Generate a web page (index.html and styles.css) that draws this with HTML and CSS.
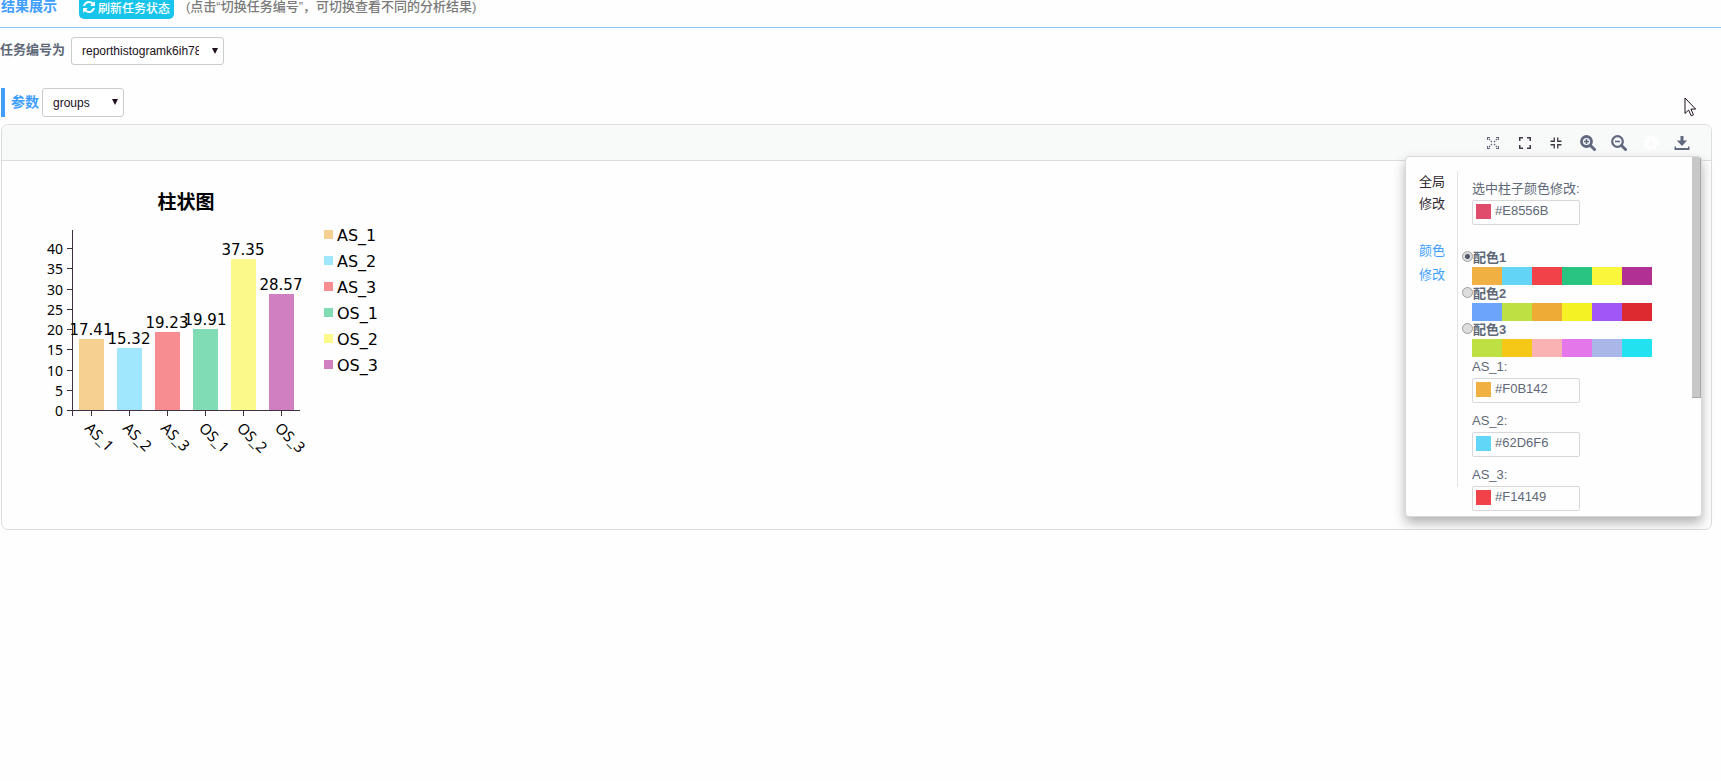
FILE: index.html
```html
<!DOCTYPE html>
<html lang="zh-CN">
<head>
    <meta charset="UTF-8">
    <meta name="viewport" content="width=device-width, initial-scale=1.0">
    <title>结果展示</title>
    <link rel="stylesheet" href="styles.css">
</head>
<body>
    <header class="page-header">
        <h1 class="page-title">结果展示</h1>
        <button class="refresh" type="button">
            <svg width="12" height="12" viewBox="0 0 1536 1536" fill="currentColor"><path d="M1511 928q0 5-1 7-64 268-268 434.500T764 1536q-146 0-282.500-55T238 1324l-129 129q-19 19-45 19t-45-19-19-45V960q0-26 19-45t45-19h448q26 0 45 19t19 45-19 45l-137 137q71 66 161 102t187 36q134 0 250-65t186-179q11-17 53-117 8-23 30-23h192q13 0 22.500 9.500t9.500 22.500zM1536 128v448q0 26-19 45t-45 19h-448q-26 0-45-19t-19-45 19-45l138-138Q969 256 768 256q-134 0-250 65T332 500q-11 17-53 117-8 23-30 23H50q-13 0-22.500-9.500T18 608v-7q65-268 270-434.500T768 0q146 0 284 55.500T1297 212l130-129q19-19 45-19t45 19 19 45z"/></svg>
            刷新任务状态
        </button>
        <p class="hint">(点击“切换任务编号”，可切换查看不同的分析结果)</p>
    </header>

    <main>
        <div class="task-row">
            <label for="task">任务编号为</label>
            <span class="select-box task-select">
                <select id="task">
                    <option>reporthistogramk6ih78</option>
                </select>
            </span>
        </div>

        <div class="param-row">
            <label for="param">参数</label>
            <span class="select-box param-select">
                <select id="param">
                    <option>groups</option>
                </select>
            </span>
        </div>

        <section class="panel">
            <div class="toolbar">
                <div class="tools">
                    <button type="button" aria-label="全屏">
                        <svg width="12" height="12" viewBox="0 0 12 12" fill="none" stroke="currentColor"><path d="M.5 3V.5H3M9 .5h2.500V3M11.500 9v2.500H9M3 11.500H.5V9" stroke-width="1.200"/><path d="M2 2l3 3M10 2L7 5M10 10L7 7M2 10l3-3" stroke-width="1.300" stroke-dasharray="1.600 1"/></svg>
                    </button>
                    <button class="dark" type="button" aria-label="放大区域">
                        <svg width="12" height="12" viewBox="0 0 12 12" fill="none" stroke="currentColor" stroke-width="1.500"><path d="M.75 4V.75H4M8 .75h3.250V4M11.250 8v3.250H8M4 11.250H.75V8"/></svg>
                    </button>
                    <button class="dark" type="button" aria-label="缩小区域">
                        <svg width="12" height="12" viewBox="0 0 12 12" fill="none" stroke="currentColor" stroke-width="1.300"><path d="M4.250 .5v3.750H.5M7.750 .5v3.750h3.750M7.750 11.500V7.750h3.750M4.250 11.500V7.750H.5"/></svg>
                    </button>
                    <button type="button" aria-label="放大">
                        <svg width="16" height="16" viewBox="0 0 16 16" fill="none" stroke="currentColor"><circle cx="6.500" cy="6.500" r="5" stroke-width="2.800"/><path d="M10.500 10.500l4 4" stroke-width="3" stroke-linecap="round"/><path d="M6.500 4v5M4 6.500h5" stroke-width="1.600"/></svg>
                    </button>
                    <button type="button" aria-label="缩小">
                        <svg width="16" height="16" viewBox="0 0 16 16" fill="none" stroke="currentColor"><circle cx="6.500" cy="6.500" r="5.300" stroke-width="2.200"/><path d="M10.500 10.500l4 4" stroke-width="3" stroke-linecap="round"/><path d="M4 6.500h5" stroke-width="1.600"/></svg>
                    </button>
                    <button class="active" type="button" aria-label="设置">
                        <svg width="16" height="16" viewBox="0 0 16 16" fill="none" stroke="currentColor"><circle cx="8" cy="8" r="4.300" stroke-width="3.500"/><circle cx="8" cy="8" r="6.500" stroke-width="2.500" stroke-dasharray="2.600 2.505"/></svg>
                    </button>
                    <button type="button" aria-label="下载">
                        <svg width="16" height="16" viewBox="0 0 16 16" fill="currentColor"><path d="M6.500 1h3v4.500h3.700L8 11 2.800 5.500h3.700zM.5 11.500h1.500v1.500h12v-1.500h1.500V15H.5z"/></svg>
                    </button>
                </div>
            </div>

            <div class="chart">
                <svg id="chart" width="400" height="340" viewBox="0 0 400 340"></svg>
            </div>

            <aside class="settings">
                <nav class="tabs">
                    <a class="tab" href="#global">全局修改</a>
                    <a class="tab tab-active" href="#color">颜色修改</a>
                </nav>
                <form class="options">
                    <div class="field">
                        <label for="selected">选中柱子颜色修改:</label>
                        <div class="color-input"><i class="c-selected"></i><input id="selected" type="text" value="#E8556B"></div>
                    </div>
                    <div class="palettes">
                        <label class="scheme"><input type="radio" name="scheme" checked>配色1</label>
                        <div class="palette scheme-1"><i></i><i></i><i></i><i></i><i></i><i></i></div>
                        <label class="scheme"><input type="radio" name="scheme">配色2</label>
                        <div class="palette scheme-2"><i></i><i></i><i></i><i></i><i></i><i></i></div>
                        <label class="scheme"><input type="radio" name="scheme">配色3</label>
                        <div class="palette scheme-3"><i></i><i></i><i></i><i></i><i></i><i></i></div>
                    </div>
                    <div class="field">
                        <label for="as1">AS_1:</label>
                        <div class="color-input"><i class="c-as1"></i><input id="as1" type="text" value="#F0B142"></div>
                    </div>
                    <div class="field">
                        <label for="as2">AS_2:</label>
                        <div class="color-input"><i class="c-as2"></i><input id="as2" type="text" value="#62D6F6"></div>
                    </div>
                    <div class="field">
                        <label for="as3">AS_3:</label>
                        <div class="color-input"><i class="c-as3"></i><input id="as3" type="text" value="#F14149"></div>
                    </div>
                </form>
                <span class="scroll-thumb"></span>
            </aside>
        </section>
    </main>

    <svg class="pointer" width="13" height="20" viewBox="0 0 13 20"><path d="M1 1v15.500l3.600-3.500 2.600 5.800 2.300-1-2.600-5.700h4.800z" fill="#fff" stroke="#201020"/></svg>

    <script src="chart.js"></script>
</body>
</html>
```

FILE: styles.css
```css
* {
    box-sizing: border-box;
}
body {
    margin: 0;
    overflow: hidden;
    background-color: #fefefe;
    color: #606878;
    font-family: "Liberation Sans", "Noto Sans CJK SC", sans-serif;
    font-size: 13px;
    line-height: 20px;
}
button, input, select {
    font-family: inherit;
    margin: 0;
}

/* page header */
.page-header {
    display: flex;
    align-items: flex-start;
    height: 28px;
    padding-left: 1px;
    border-bottom: 1px solid #8cc5ff;
}
.page-title {
    margin: -4px 22px 0 0;
    font-size: 14px;
    color: #409eff;
}
.refresh {
    display: flex;
    align-items: center;
    gap: 3px;
    height: 24px;
    margin-top: -5px;
    padding: 0 4px;
    border: none;
    border-radius: 5px;
    background-color: #17c4ea;
    color: #fff;
    font-size: 12px;
    font-weight: 500;
}
.hint {
    margin: -3px 0 0 12px;
    color: #7a7a7a;
    font-weight: 500;
}

/* selects */
.task-row {
    display: flex;
    align-items: center;
    gap: 6px;
    padding-top: 9px;
    font-weight: bold;
}
.task-row label {
    padding-bottom: 2px;
}
.param-row {
    display: flex;
    align-items: center;
    gap: 3px;
    margin: 23px 0 7px 1px;
    border-left: 4px solid #409eff;
    padding-left: 6px;
    color: #409eff;
    font-size: 14px;
    font-weight: bold;
}
.param-row label {
    padding-bottom: 2px;
}
.select-box {
    position: relative;
    height: 28px;
}
.select-box::after {
    content: "";
    position: absolute;
    right: 6px;
    top: 11px;
    border: 3px solid transparent;
    border-top: 6px solid #201020;
    border-bottom: none;
    pointer-events: none;
}
.select-box select {
    appearance: none;
    width: 100%;
    height: 100%;
    padding: 0 24px 0 10px;
    border: 1px solid #ccc;
    border-radius: 3px;
    background-color: #fff;
    color: #201020;
    font-size: 12px;
}
.task-select {
    width: 153px;
}
.param-select {
    width: 82px;
}
.param-row .select-box {
    height: 29px;
}

/* result panel */
.panel {
    position: relative;
    margin: 0 9px 0 1px;
    border: 1px solid #ddd;
    border-radius: 7px;
}
.toolbar {
    display: flex;
    justify-content: flex-end;
    height: 36px;
    padding: 6px 17px 0 0;
    border-bottom: 1px solid #ddd;
    border-radius: 6px 6px 0 0;
    background-color: #f8faf9;
}
.tools {
    display: flex;
    justify-content: space-between;
    width: 213px;
}
.tools button {
    display: flex;
    align-items: center;
    justify-content: center;
    width: 24px;
    height: 24px;
    padding: 0;
    border: none;
    background: none;
    color: #606880;
}
.tools .dark {
    color: #403848;
}
.tools .active {
    color: #fff;
}
.chart {
    padding: 14px 0;
}
.chart svg {
    display: block;
    font-family: "DejaVu Sans", sans-serif;
    fill: #000;
}
.chart .title {
    font-family: "Noto Sans CJK SC", sans-serif;
    font-size: 19px;
    font-weight: bold;
}
.chart .tick {
    font-family: "Noto Sans", sans-serif;
    font-size: 14px;
}
.chart .name {
    font-family: "Noto Sans", sans-serif;
    font-size: 15px;
}
.chart .legend {
    font-family: "DejaVu Sans", sans-serif;
    font-size: 16px;
}
.chart .value {
    font-size: 15px;
}
.chart .axis {
    stroke: #403040;
}

/* settings popover */
.settings {
    position: absolute;
    top: 31px;
    right: 9px;
    display: flex;
    width: 297px;
    height: 361px;
    padding: 14px 0 0 13px;
    overflow: hidden;
    border: 1px solid #d8d8d8;
    border-radius: 4px;
    background-color: #fefefe;
    box-shadow: 0 6px 12px rgba(0, 0, 0, 0.3);
}
.tabs {
    width: 39px;
    height: 316px;
    border-right: 1px solid #e4e4e4;
}
.tab {
    display: block;
    width: 26px;
    margin-bottom: 24px;
    color: #302830;
    line-height: 22px;
    text-decoration: none;
}
.tab-active {
    color: #409eff;
    line-height: 24px;
}
.options {
    padding: 8px 0 0 14px;
}
.field {
    margin-bottom: 8px;
}
.field label {
    display: block;
    height: 21px;
}
.color-input {
    display: flex;
    gap: 4px;
    width: 108px;
    height: 25px;
    padding: 3px;
    border: 1px solid #d8d8d8;
    border-radius: 2px;
}
.color-input i {
    flex: none;
    width: 15px;
    height: 15px;
}
.color-input input {
    width: 76px;
    height: 12px;
    padding: 0;
    border: none;
    outline: none;
    background: none;
    color: #606878;
    font-size: 13px;
}
.c-selected { background-color: #e04c6b; }
.c-as1 { background-color: #f0b142; }
.c-as2 { background-color: #62d6f6; }
.c-as3 { background-color: #f14149; }

.palettes {
    margin-top: 24px;
}
.scheme {
    display: flex;
    height: 18px;
    margin-left: -9px;
    font-weight: bold;
    line-height: 18px;
}
.scheme input {
    appearance: none;
    width: 11px;
    height: 11px;
    margin: 2px 0 0 -1px;
    border: 1px solid #a0a0a0;
    border-radius: 50%;
    background-color: #ddd;
}
.scheme input:checked {
    background: radial-gradient(circle, #505868 0 2px, #ddd 3px);
}
.palette {
    display: flex;
    width: 180px;
    height: 18px;
}
.palette i {
    flex: 1;
}
.scheme-1 i:nth-child(1) { background-color: #f0b142; }
.scheme-1 i:nth-child(2) { background-color: #62d4f6; }
.scheme-1 i:nth-child(3) { background-color: #f14149; }
.scheme-1 i:nth-child(4) { background-color: #29c482; }
.scheme-1 i:nth-child(5) { background-color: #f9f63b; }
.scheme-1 i:nth-child(6) { background-color: #b03093; }
.scheme-2 i:nth-child(1) { background-color: #6ba4fa; }
.scheme-2 i:nth-child(2) { background-color: #bfe043; }
.scheme-2 i:nth-child(3) { background-color: #eeab35; }
.scheme-2 i:nth-child(4) { background-color: #f4f225; }
.scheme-2 i:nth-child(5) { background-color: #a156f6; }
.scheme-2 i:nth-child(6) { background-color: #dc2a30; }
.scheme-3 i:nth-child(1) { background-color: #bfe043; }
.scheme-3 i:nth-child(2) { background-color: #f5c818; }
.scheme-3 i:nth-child(3) { background-color: #fab2b2; }
.scheme-3 i:nth-child(4) { background-color: #e478ea; }
.scheme-3 i:nth-child(5) { background-color: #aab6e8; }
.scheme-3 i:nth-child(6) { background-color: #22e2f0; }

.scroll-thumb {
    position: absolute;
    top: 0;
    right: 0;
    width: 9px;
    height: 241px;
    border-right: 1px solid #a8a8a8;
    border-bottom: 1px solid #a8a8b0;
    background-color: #c8c8c8;
}
.pointer {
    position: absolute;
    top: 97px;
    right: 24px;
}
```

FILE: chart.js
```javascript
const svg = document.getElementById('chart');
const data = [
    { name: 'AS_1', value: 17.41, color: '#f6d090' },
    { name: 'AS_2', value: 15.32, color: '#a0e6fc' },
    { name: 'AS_3', value: 19.23, color: '#f78d90' },
    { name: 'OS_1', value: 19.91, color: '#80dcb4' },
    { name: 'OS_2', value: 37.35, color: '#fbf98a' },
    { name: 'OS_3', value: 28.57, color: '#d080c0' }
];
const left = 70;
const bottom = 235;
const step = 38;
const unit = 4.05;

function add(tag, attrs, text) {
    const el = document.createElementNS('http://www.w3.org/2000/svg', tag);
    for (const key in attrs) el.setAttribute(key, attrs[key]);
    if (text !== undefined) el.textContent = text;
    svg.appendChild(el);
}

add('text', { x: 184, y: 34, 'text-anchor': 'middle', class: 'title' }, '柱状图');

// bars
data.forEach((d, i) => {
    const h = Math.round(d.value * unit);
    add('rect', { x: left + 7 + i * step, y: bottom - h, width: 25, height: h, fill: d.color });
});

// axes
add('path', { d: `M${left + .5} 55V${bottom + 6}M${left - 5} ${bottom + .5}H${left + 228}`, class: 'axis' });
for (let v = 0; v <= 40; v += 5) {
    const y = Math.round(bottom - v * unit);
    if (v) add('path', { d: `M${left - 5} ${y + .5}h6`, class: 'axis' });
    add('text', { x: left - 9, y: y + 6, 'text-anchor': 'end', class: 'tick' }, v);
}

data.forEach((d, i) => {
    const x = left + 19 + i * step;
    add('path', { d: `M${x + .5} ${bottom}v6`, class: 'axis' });
    add('text', { x: x, y: bottom - d.value * unit - 4, 'text-anchor': 'middle', class: 'value' }, d.value);
    add('text', { transform: `translate(${x - 7} ${bottom + 19}) rotate(45)`, class: 'name' }, d.name);
    add('rect', { x: 322, y: 55 + i * 26, width: 9, height: 9, fill: d.color });
    add('text', { x: 335, y: 66 + i * 26, class: 'legend' }, d.name);
});
```
